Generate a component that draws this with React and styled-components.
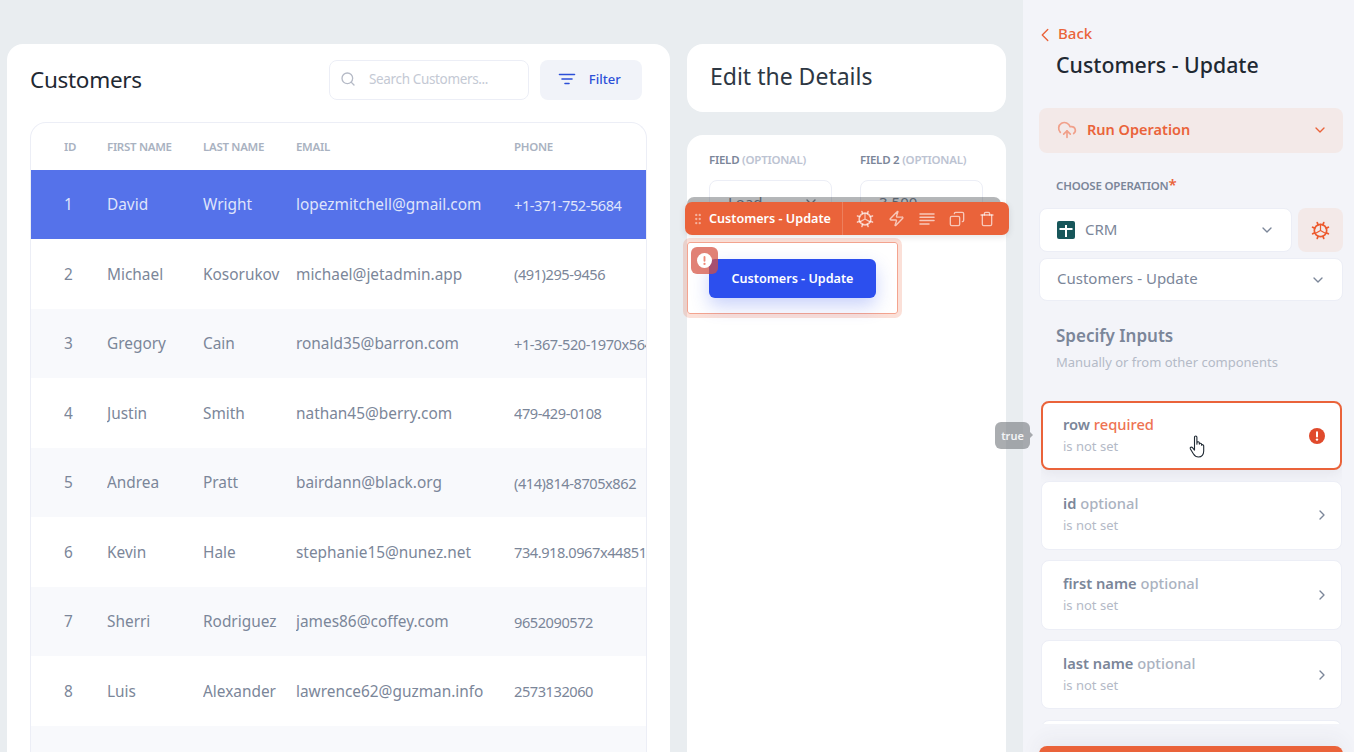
import React from 'react';
import styled, { createGlobalStyle } from 'styled-components';
import {
  ChevronDown, ChevronLeft, ChevronRight, CloudUpload, Copy, GripVertical,
  Search, Trash, Zap,
} from 'lucide-react';

const Global = createGlobalStyle`
  html, body { margin: 0; padding: 0; height: 100%; overflow: hidden; }
  body { font-family: "Noto Sans", "Open Sans", sans-serif; background: #e9edf0; }
  * { box-sizing: border-box; }
`;

const Page = styled.div`
  display: flex;
  height: 752px;
  overflow: hidden;
  background: #e9edf0;
`;

const Main = styled.main`
  display: flex;
  gap: 17px;
  width: 1023px;
  padding: 44px 17px 0 7px;
`;

const TableCard = styled.section`
  width: 663px;
  background: #fff;
  border-radius: 16px 16px 0 0;
  padding: 16px 23px 0;
  overflow: hidden;
`;

const TableHead = styled.header`
  display: flex;
  align-items: center;
  height: 40px;
  margin-bottom: 22px;
`;

const PageTitle = styled.h1`
  margin: 0;
  flex: 1;
  padding-bottom: 2px;
  font-size: 22.5px;
  font-weight: 400;
  letter-spacing: -0.3px;
  color: #1f2933;
`;

const SearchBox = styled.div`
  display: flex;
  align-items: center;
  gap: 13px;
  width: 200px;
  height: 40px;
  padding: 0 0 2px 10px;
  border: 1px solid #eceef6;
  border-radius: 8px;
  font-size: 13.5px;
  letter-spacing: -0.35px;
  color: #c4c9d4;
  svg { color: #b5bac6; }
`;

const FilterButton = styled.button`
  display: flex;
  align-items: center;
  justify-content: center;
  gap: 11.5px;
  width: 102px;
  height: 40px;
  margin: 0 5px 0 11px;
  padding: 0 4px 2px 0;
  border: 0;
  border-radius: 8px;
  background: #f1f3f9;
  color: #2c4fd8;
  font: 500 13px "Noto Sans", sans-serif;
`;

const TableFrame = styled.div`
  border: 1px solid #eceef6;
  border-bottom: 0;
  border-radius: 16px 16px 0 0;
  overflow: hidden;
`;

const COLUMNS = '43px 96px 93px 218px 1fr';

const HeadRow = styled.div`
  display: grid;
  grid-template-columns: ${COLUMNS};
  align-items: center;
  height: 46.9px;
  padding-left: 33px;
  font-size: 11.5px;
  font-weight: 600;
  letter-spacing: -0.3px;
  color: #a9b2c1;
`;

const BodyRow = styled.div`
  display: grid;
  grid-template-columns: ${COLUMNS};
  align-items: center;
  height: 69.5px;
  padding-left: 33px;
  font-size: 15.4px;
  white-space: nowrap;
  color: ${(p) => (p.$active ? '#dfe4fb' : '#7b8699')};
  background: ${(p) => (p.$active ? '#5572ea' : p.$striped ? '#f8f9fc' : '#fff')};
`;

const Cell = styled.span`
  overflow: hidden;
`;

const PhoneCell = styled(Cell)`
  font-size: 14.6px;
  letter-spacing: -0.45px;
`;

const EditColumn = styled.div`
  display: flex;
  flex-direction: column;
  gap: 23px;
  width: 319px;
`;

const EditHead = styled.section`
  display: flex;
  align-items: center;
  height: 68px;
  padding: 0 23px 4px;
  background: #fff;
  border-radius: 16px;
  font-size: 23px;
  color: #2d3743;
`;

const EditBody = styled.section`
  position: relative;
  flex: 1;
  background: #fff;
  border-radius: 16px 16px 0 0;
`;

const FieldGrid = styled.div`
  display: grid;
  grid-template-columns: 123px 123px;
  gap: 28px;
  padding: 16px 22px 0;
`;

const FieldLabel = styled.label`
  display: block;
  margin-bottom: 12px;
  font-size: 11.5px;
  font-weight: 600;
  letter-spacing: -0.25px;
  line-height: 17px;
  white-space: nowrap;
  color: #7b8699;
  span { color: #bcc3d2; }
`;

const FieldBox = styled.div`
  display: flex;
  align-items: center;
  justify-content: space-between;
  height: 44px;
  padding: 0 12px 0 18px;
  border: 1px solid #eceef6;
  border-radius: 8px;
  font-size: 15px;
  color: #6c7686;
`;

const Scrim = styled.div`
  position: absolute;
  left: 0;
  right: 5px;
  top: 62px;
  height: 20px;
  border-radius: 7px 7px 0 0;
  background: rgba(60, 66, 70, 0.38);
`;

const ToolBar = styled.div`
  position: absolute;
  left: -2px;
  top: 67px;
  display: flex;
  align-items: center;
  width: 324px;
  height: 33px;
  border-radius: 7px;
  background: #ea633a;
  color: #fff;
  box-shadow: 0 2px 6px rgba(40, 50, 60, 0.12);
`;

const ToolName = styled.div`
  display: flex;
  align-items: center;
  gap: 4px;
  width: 158px;
  height: 100%;
  padding-left: 6px;
  border-right: 1px solid rgba(255, 255, 255, 0.18);
  font-size: 12.6px;
  font-weight: 600;
  white-space: nowrap;
  svg { color: rgba(255, 255, 255, 0.5); }
`;

const ToolIcons = styled.div`
  display: flex;
  align-items: center;
  gap: 14px;
  padding-left: 13px;
  color: rgba(255, 255, 255, 0.65);
`;

const MirroredCopy = styled(Copy)`
  transform: scaleX(-1);
`;

const SelectedFrame = styled.div`
  position: relative;
  display: flex;
  align-items: center;
  width: 211px;
  height: 72px;
  margin-top: 18px;
  padding-left: 21px;
  border: 1px solid #f4a48f;
  border-radius: 3px;
  box-shadow: 0 0 0 4px rgba(236, 100, 58, 0.2);
`;

const ActionButton = styled.button`
  width: 167px;
  height: 39px;
  padding: 0;
  border: 0;
  border-radius: 6px;
  background: #2c4fee;
  color: #fff;
  font: 600 12.6px "Noto Sans", sans-serif;
  box-shadow: 0 8px 18px rgba(44, 79, 238, 0.25);
`;

const ErrorBadge = styled.div`
  position: absolute;
  left: 3px;
  top: 4px;
  display: flex;
  align-items: center;
  justify-content: center;
  width: 27px;
  height: 27px;
  border-radius: 6px;
  background: rgba(214, 80, 64, 0.72);
`;

const SidePanel = styled.aside`
  position: relative;
  display: flex;
  flex-direction: column;
  width: 331px;
  height: 752px;
  padding: 0 11px 0 16px;
  background: #f3f4f9;
  & > * { flex: none; }
`;

const BackLink = styled.a`
  display: flex;
  align-items: center;
  gap: 2px;
  height: 20px;
  margin-top: 23px;
  font-size: 15px;
  font-weight: 500;
  color: #ea633a;
  svg { margin: 3px 0 0 -5px; }
`;

const PanelTitle = styled.h2`
  margin: 8px 0 0 17px;
  font-size: 21.3px;
  line-height: 28px;
  font-weight: 500;
  color: #1f2933;
`;

const RunBar = styled.div`
  display: flex;
  align-items: center;
  gap: 10px;
  height: 45px;
  margin-top: 29px;
  padding: 0 15px 2px 18px;
  border-radius: 8px;
  background: #f3e9e8;
  font-size: 14.5px;
  font-weight: 600;
  color: #ea633a;
  span { flex: 1; padding-bottom: 2px; }
  svg:first-child { color: #f1a08a; }
`;

const OperationLabel = styled.div`
  margin: 25px 0 12px 17px;
  height: 18px;
  font-size: 11.5px;
  font-weight: 600;
  letter-spacing: -0.2px;
  color: #7b8699;
  sup { color: #ea633a; font-size: 15px; line-height: 0; vertical-align: baseline; }
`;

const SelectRow = styled.div`
  display: flex;
  gap: 6px;
  margin-top: ${(p) => p.$top || 0}px;
`;

const SelectBox = styled.div`
  display: flex;
  align-items: center;
  gap: 10px;
  flex: 1;
  height: ${(p) => p.$height || 44}px;
  padding: 0 16px 0 17px;
  border: 1px solid #eceef6;
  border-radius: 8px;
  background: #fff;
  font-size: 15px;
  color: #7b8699;
  span { flex: 1; padding-bottom: 2.5px; }
`;

const GearButton = styled.div`
  display: flex;
  align-items: center;
  justify-content: center;
  width: 45px;
  height: 44px;
  border-radius: 8px;
  background: #f3e9e8;
  color: #ec5a2e;
`;

const SectionTitle = styled.div`
  margin: 22px 0 0 17px;
  font-size: 17px;
  font-weight: 600;
  line-height: 26px;
  color: #7b8699;
`;

const SectionHint = styled.div`
  margin: 3px 0 29px 17px;
  font-size: 13px;
  line-height: 20px;
  color: #b4bac7;
`;

const InputList = styled.div`
  display: flex;
  flex-direction: column;
  gap: 10.5px;
  height: 323px;
  margin: 0 1px 0 2px;
  overflow: hidden;
`;

const InputCard = styled.div`
  position: relative;
  flex: none;
  display: flex;
  align-items: center;
  height: 69.2px;
  padding: ${(p) => (p.$error ? '0 15px 0 20px' : '0 11px 0 21px')};
  border: ${(p) => (p.$error ? '2px solid #ea633a' : '1px solid #eceef6')};
  border-radius: 8px;
  background: #fff;
  box-shadow: ${(p) => (p.$error ? '0 4px 14px rgba(60, 70, 90, 0.08)' : 'none')};
`;

const InputText = styled.div`
  flex: 1;
  padding-bottom: 2px;
`;

const InputName = styled.div`
  font-size: 14.7px;
  line-height: 23px;
  font-weight: 600;
  color: #7b8699;
  em {
    font-style: normal;
    font-weight: 500;
    color: ${(p) => (p.$error ? '#ee7352' : '#aab2c0')};
  }
`;

const InputValue = styled.div`
  font-size: 13px;
  line-height: 21px;
  color: #b4bac7;
`;

const ChevronMark = styled.span`
  display: flex;
  color: #7b8699;
`;

const TrueTip = styled.div`
  position: absolute;
  left: -28px;
  top: 422px;
  display: flex;
  align-items: center;
  justify-content: center;
  width: 35px;
  height: 27px;
  border-radius: 6px;
  background: rgba(118, 122, 128, 0.62);
  color: #f3f4f6;
  font-size: 11px;
  font-weight: 600;
  &::after {
    content: '';
    position: absolute;
    right: -3px;
    top: 10px;
    border-left: 3px solid rgba(118, 122, 128, 0.62);
    border-top: 3px solid transparent;
    border-bottom: 3px solid transparent;
  }
`;

const HandCursor = styled.svg`
  position: absolute;
  left: 146px;
  top: 32px;
`;

const PrimaryButton = styled.div`
  height: 45px;
  margin-top: 22px;
  border-radius: 8px;
  background: #ea633a;
  box-shadow: 0 -6px 20px rgba(60, 70, 90, 0.06);
`;

const ROWS = [
  ['1', 'David', 'Wright', 'lopezmitchell@gmail.com', '+1-371-752-5684'],
  ['2', 'Michael', 'Kosorukov', 'michael@jetadmin.app', '(491)295-9456'],
  ['3', 'Gregory', 'Cain', 'ronald35@barron.com', '+1-367-520-1970x5648'],
  ['4', 'Justin', 'Smith', 'nathan45@berry.com', '479-429-0108'],
  ['5', 'Andrea', 'Pratt', 'bairdann@black.org', '(414)814-8705x862'],
  ['6', 'Kevin', 'Hale', 'stephanie15@nunez.net', '734.918.0967x44851'],
  ['7', 'Sherri', 'Rodriguez', 'james86@coffey.com', '9652090572'],
  ['8', 'Luis', 'Alexander', 'lawrence62@guzman.info', '2573132060'],
  ['', '', '', '', ''],
];

const INPUTS = ['id', 'first name', 'last name'];

function FilterLines() {
  return (
    <svg width="20" height="20" viewBox="0 0 20 20" fill="none" stroke="currentColor" strokeWidth="1.6" strokeLinecap="round">
      <path d="M2.5 5.5h15M5 10h10M8 14.5h4" />
    </svg>
  );
}

function LinesIcon() {
  return (
    <svg width="16" height="16" viewBox="0 0 16 16" stroke="currentColor" strokeWidth="1.5" strokeLinecap="round">
      <path d="M1 3h14M1 6.3h14M1 9.6h14M1 13h9" />
    </svg>
  );
}

function GearIcon({ size }) {
  // ring, eight teeth and three spokes through the hub
  const teeth = [0, 45, 90, 135, 180, 225, 270, 315].map((deg) => {
    const a = (deg * Math.PI) / 180 + Math.PI / 8;
    const x1 = 10 + 6.5 * Math.cos(a);
    const y1 = 10 + 6.5 * Math.sin(a);
    const x2 = 10 + 9 * Math.cos(a);
    const y2 = 10 + 9 * Math.sin(a);
    return `M${x1.toFixed(2)} ${y1.toFixed(2)}L${x2.toFixed(2)} ${y2.toFixed(2)}`;
  }).join('');
  return (
    <svg width={size} height={size} viewBox="0 0 20 20" fill="none" stroke="currentColor" strokeWidth="1.8" strokeLinecap="round">
      <circle cx="10" cy="10" r="6.5" />
      <path d={teeth} />
      <path d="M10 3.5V10M4.4 13.2 10 10M15.6 13.2 10 10" strokeWidth="1.3" />
    </svg>
  );
}

function CrmLogo() {
  return (
    <svg width="18" height="18" viewBox="0 0 18 18">
      <rect width="18" height="18" rx="2" fill="#17565a" />
      <path d="M8 4h2v3h5.5v2H10v7H8V9H2.5V7H8z" fill="#fff" />
    </svg>
  );
}

function Alert({ size, bg, fg }) {
  return (
    <svg width={size} height={size} viewBox="0 0 16 16">
      <circle cx="8" cy="8" r="8" fill={bg} />
      <rect x="7" y="3.2" width="2" height="6.2" rx="1" fill={fg} />
      <circle cx="8" cy="11.6" r="1.2" fill={fg} />
    </svg>
  );
}

export default function App() {
  return (
    <Page>
      <Global />
      <Main>
        <TableCard>
          <TableHead>
            <PageTitle>Customers</PageTitle>
            <SearchBox><Search size={16} />Search Customers...</SearchBox>
            <FilterButton><FilterLines />Filter</FilterButton>
          </TableHead>
          <TableFrame>
            <HeadRow>
              <Cell>ID</Cell>
              <Cell>FIRST NAME</Cell>
              <Cell>LAST NAME</Cell>
              <Cell>EMAIL</Cell>
              <Cell>PHONE</Cell>
            </HeadRow>
            {ROWS.map((r, i) => (
              <BodyRow key={i} $active={i === 0} $striped={i % 2 === 0}>
                <Cell>{r[0]}</Cell>
                <Cell>{r[1]}</Cell>
                <Cell>{r[2]}</Cell>
                <Cell>{r[3]}</Cell>
                <PhoneCell>{r[4]}</PhoneCell>
              </BodyRow>
            ))}
          </TableFrame>
        </TableCard>

        <EditColumn>
          <EditHead>Edit the Details</EditHead>
          <EditBody>
            <FieldGrid>
              <div>
                <FieldLabel>FIELD <span>(OPTIONAL)</span></FieldLabel>
                <FieldBox>Load<ChevronDown size={16} /></FieldBox>
              </div>
              <div>
                <FieldLabel>FIELD 2 <span>(OPTIONAL)</span></FieldLabel>
                <FieldBox>3,500</FieldBox>
              </div>
            </FieldGrid>
            <SelectedFrame>
              <ActionButton>Customers - Update</ActionButton>
              <ErrorBadge><Alert size={15} bg="#fff" fg="#ee8a78" /></ErrorBadge>
            </SelectedFrame>
            <Scrim />
            <ToolBar>
              <ToolName><GripVertical size={14} />Customers - Update</ToolName>
              <ToolIcons>
                <GearIcon size={18} />
                <Zap size={17} />
                <LinesIcon />
                <MirroredCopy size={16} />
                <Trash size={16} />
              </ToolIcons>
            </ToolBar>
          </EditBody>
        </EditColumn>
      </Main>

      <SidePanel>
        <BackLink><ChevronLeft size={22} strokeWidth={1.5} />Back</BackLink>
        <PanelTitle>Customers - Update</PanelTitle>
        <RunBar>
          <CloudUpload size={20} />
          <span>Run Operation</span>
          <ChevronDown size={16} />
        </RunBar>
        <OperationLabel>CHOOSE OPERATION<sup>*</sup></OperationLabel>
        <SelectRow>
          <SelectBox>
            <CrmLogo />
            <span>CRM</span>
            <ChevronDown size={16} />
          </SelectBox>
          <GearButton><GearIcon size={19} /></GearButton>
        </SelectRow>
        <SelectRow $top={6}>
          <SelectBox $height={43}>
            <span>Customers - Update</span>
            <ChevronDown size={16} />
          </SelectBox>
        </SelectRow>
        <SectionTitle>Specify Inputs</SectionTitle>
        <SectionHint>Manually or from other components</SectionHint>
        <InputList>
          <InputCard $error>
            <InputText>
              <InputName $error>row <em>required</em></InputName>
              <InputValue>is not set</InputValue>
            </InputText>
            <Alert size={16} bg="#e04a2c" fg="#fff" />
            <HandCursor width="18" height="24" viewBox="0 0 18 24" fill="#fff" stroke="#1f2933" strokeWidth="1.1" strokeLinejoin="round">
              <path d="M5.5 2.2c0-1.6 2.4-1.6 2.4 0v7l.1-1.6c.2-1.3 2.3-1.2 2.3.2v1.3c.2-1.2 2.2-1.1 2.3.2v1c.3-1 2-.8 2.1.5v5.2c0 3.4-2 6-5.2 6-2.6 0-3.9-1.2-5-3L1.4 14c-.8-1.5 1-2.6 2.1-1.3l2 2.4z" />
            </HandCursor>
          </InputCard>
          {INPUTS.map((name) => (
            <InputCard key={name}>
              <InputText>
                <InputName>{name} <em>optional</em></InputName>
                <InputValue>is not set</InputValue>
              </InputText>
              <ChevronMark><ChevronRight size={16} /></ChevronMark>
            </InputCard>
          ))}
          <InputCard />
        </InputList>
        <PrimaryButton />
        <TrueTip>true</TrueTip>
      </SidePanel>
    </Page>
  );
}
